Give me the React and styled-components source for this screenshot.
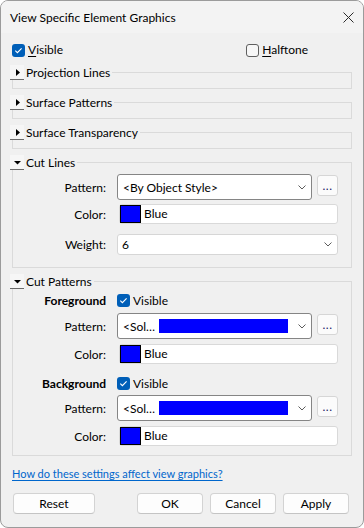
import styled, { createGlobalStyle } from 'styled-components'

const GlobalStyle = createGlobalStyle`
  html, body { margin: 0; padding: 0; background: #ffffff; }
  body {
    font-family: Lato, "Noto Sans", sans-serif;
    font-size: 12px;
    color: #000000;
  }
  * { box-sizing: border-box; }
`

function Chevron() {
    return (
        <svg width="8" height="5" viewBox="0 0 8 5">
            <polyline points="0.5,0.5 4,4 7.5,0.5" fill="none" stroke="#5c5c5c" strokeWidth="1" />
        </svg>
    )
}

function Check({ checked }) {
    return (
        <CheckBox $checked={checked}>
            {checked && (
                <svg width="13" height="13" viewBox="0 0 13 13">
                    <polyline points="3.3,6.6 5.4,8.7 9.6,4.4" fill="none" stroke="#ffffff" strokeWidth="1.1" />
                </svg>
            )}
        </CheckBox>
    )
}

function Group({ title, open, children }) {
    return (
        <Frame>
            <Legend>
                <Toggle>
                    <svg width="14" height="15" viewBox="0 0 14 15">
                        {open
                            ? <polygon points="4,6 11,6 7.5,9.5" fill="#000" />
                            : <polygon points="6,4 10,7.5 6,11" fill="#000" />}
                    </svg>
                </Toggle>
                <span>{title}</span>
            </Legend>
            {children}
        </Frame>
    )
}

function ColorField() {
    return (
        <ColorBox>
            <Swatch />
            <span>Blue</span>
        </ColorBox>
    )
}

function PatternRow({ mt, children }) {
    return (
        <Row $mt={mt} $h={26}>
            <Label>Pattern:</Label>
            <Pair>
                <Combo $dark $h={26}>
                    {children}
                    <Chevron />
                </Combo>
                <MoreButton>...</MoreButton>
            </Pair>
        </Row>
    )
}

export default function App() {
    return (
        <>
            <GlobalStyle />
            <Window>
                <TitleBar>
                    <span>View Specific Element Graphics</span>
                    <svg width="11" height="11" viewBox="0 0 11 11">
                        <path d="M0.5 0.5 L10.5 10.5 M10.5 0.5 L0.5 10.5" stroke="#2b2b2b" strokeWidth="1" />
                    </svg>
                </TitleBar>
                <Body>
                    <TopRow>
                        <CheckLabel>
                            <Check checked />
                            <span><u>V</u>isible</span>
                        </CheckLabel>
                        <CheckLabel>
                            <Check />
                            <span><u>H</u>alftone</span>
                        </CheckLabel>
                    </TopRow>
                    <Groups>
                        <Group title="Projection Lines" />
                        <Group title="Surface Patterns" />
                        <Group title="Surface Transparency" />
                        <Group title="Cut Lines" open>
                            <Rows $pt={4} $pb={12}>
                                <PatternRow>
                                    <ComboText>&lt;By Object Style&gt;</ComboText>
                                </PatternRow>
                                <Row $mt={4} $h={20}>
                                    <Label>Color:</Label>
                                    <ColorField />
                                </Row>
                                <Row $mt={10} $h={21}>
                                    <Label>Weight:</Label>
                                    <Combo $h={21}>
                                        <ComboText $pl={4}>6</ComboText>
                                        <Chevron />
                                    </Combo>
                                </Row>
                            </Rows>
                        </Group>
                        <Group title="Cut Patterns" open>
                            <Rows $pt={4} $pb={9}>
                                <Row $h={14}>
                                    <Label $bold>Foreground</Label>
                                    <CheckLabel>
                                        <Check checked />
                                        <span>Visible</span>
                                    </CheckLabel>
                                </Row>
                                <PatternRow mt={6}>
                                    <ComboText>&lt;Sol…</ComboText>
                                    <PatternFill />
                                </PatternRow>
                                <Row $mt={5} $h={20}>
                                    <Label>Color:</Label>
                                    <ColorField />
                                </Row>
                                <Row $mt={12} $h={14}>
                                    <Label $bold>Background</Label>
                                    <CheckLabel>
                                        <Check checked />
                                        <span>Visible</span>
                                    </CheckLabel>
                                </Row>
                                <PatternRow mt={5}>
                                    <ComboText>&lt;Sol…</ComboText>
                                    <PatternFill />
                                </PatternRow>
                                <Row $mt={5} $h={20}>
                                    <Label>Color:</Label>
                                    <ColorField />
                                </Row>
                            </Rows>
                        </Group>
                    </Groups>
                    <HelpLink href="#">How do these settings affect view graphics?</HelpLink>
                    <Buttons>
                        <Button $w={82}>Reset</Button>
                        <Spacer />
                        <Button>OK</Button>
                        <Button>Cancel</Button>
                        <Button>Apply</Button>
                    </Buttons>
                </Body>
            </Window>
        </>
    )
}

const Window = styled.div`
    width: 364px;
    height: 528px;
    background: #f0f0f0;
    border: 1px solid #9b9b9b;
    border-radius: 8px;
    overflow: hidden;
    display: flex;
    flex-direction: column;
`

const TitleBar = styled.div`
    height: 32px;
    flex: none;
    display: flex;
    align-items: center;
    justify-content: space-between;
    padding: 0 9px 0 9px;
    background: #f3f3f3;
`

const Body = styled.div`
    flex: 1;
    display: flex;
    flex-direction: column;
    padding: 10px 11px 13px 11px;
`

const TopRow = styled.div`
    display: flex;
    justify-content: space-between;
    height: 14px;
    padding-right: 44px;
`

const CheckLabel = styled.label`
    display: flex;
    align-items: center;
    gap: 3px;
    line-height: 14px;
    u { text-decoration-thickness: 1px; text-underline-offset: 2px; }
`

const CheckBox = styled.span`
    width: 13px;
    height: 13px;
    flex: none;
    border-radius: 3px;
    display: flex;
    background: ${p => p.$checked ? '#005fb8' : '#f7f7f7'};
    border: ${p => p.$checked ? 'none' : '1px solid #5f5f5f'};
`

const Groups = styled.div`
    display: flex;
    flex-direction: column;
    gap: 6px;
    margin-top: 8px;
`

const Frame = styled.fieldset`
    margin: 0;
    min-width: 0;
    padding: 0 13px 8px 0;
    border: 1px solid #dadada;
`

const Legend = styled.legend`
    display: flex;
    align-items: center;
    gap: 2px;
    height: 15px;
    padding: 0 2px 0 0;
    margin-left: -3px;
    line-height: 15px;
`

const Toggle = styled.span`
    width: 14px;
    height: 15px;
    display: flex;
    background: #f6f6f6;
    border-bottom: 1px solid #6a6a6a;
`

const Rows = styled.div`
    display: flex;
    flex-direction: column;
    padding-top: ${p => p.$pt}px;
    margin-bottom: ${p => p.$pb - 8}px;
`

const Row = styled.div`
    display: grid;
    grid-template-columns: 93px 1fr;
    column-gap: 11px;
    align-items: center;
    height: ${p => p.$h}px;
    margin-top: ${p => p.$mt || 0}px;
`

const Label = styled.span`
    text-align: right;
    font-weight: ${p => p.$bold ? 700 : 400};
    white-space: nowrap;
`

const Pair = styled.div`
    display: flex;
    gap: 5px;
    align-items: flex-start;
    height: 100%;
`

const Combo = styled.div`
    flex: 1;
    height: ${p => p.$h}px;
    display: flex;
    align-items: center;
    gap: 6px;
    padding-right: 5px;
    background: #ffffff;
    border: 1px solid ${p => p.$dark ? '#858585' : '#d6d6d6'};
    border-radius: 3px;
    svg { margin-left: auto; flex: none; }
`

const ComboText = styled.span`
    padding-left: ${p => p.$pl || 5}px;
    white-space: nowrap;
`

const PatternFill = styled.span`
    width: 129px;
    height: 14px;
    margin-left: -2px;
    background: #0000ff;
`

const MoreButton = styled.button`
    width: 21px;
    height: 21px;
    margin-top: 1px;
    padding: 0 0 1px 0;
    font: inherit;
    color: #1c1c6a;
    letter-spacing: 0.5px;
    background: #fbfbfb;
    border: 1px solid #d6d6d6;
    border-radius: 3px;
`

const ColorBox = styled.div`
    height: 20px;
    margin-left: 2px;
    display: flex;
    align-items: stretch;
    gap: 3px;
    background: #ffffff;
    border: 1px solid #d9d9d9;
    border-radius: 3px;
    span { line-height: 18px; }
`

const Swatch = styled.div`
    width: 21px;
    background: #0000ff;
    border: 1px solid #000000;
`

const HelpLink = styled.a`
    margin-top: 10px;
    font-size: 11px;
    line-height: 16px;
    color: #0066cc;
    text-decoration: underline;
    text-underline-offset: 2px;
`

const Buttons = styled.div`
    display: flex;
    gap: 7px;
    margin-top: auto;
    padding: 0 3px 0 1px;
`

const Spacer = styled.div`
    flex: 1;
`

const Button = styled.button`
    width: ${p => p.$w || 66}px;
    height: 21px;
    padding: 0;
    font: inherit;
    color: #000000;
    background: #fdfdfd;
    border: 1px solid #d3d3d3;
    border-bottom-color: #c4c4c4;
    border-radius: 4px;
`
